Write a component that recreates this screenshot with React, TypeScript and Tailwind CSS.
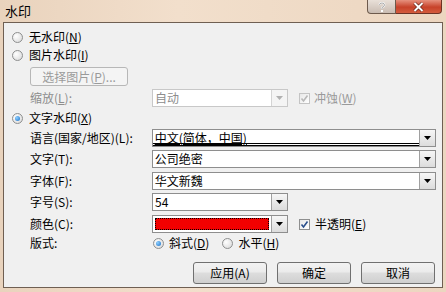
import React from 'react';

const FONT = "font-['SimSun','Noto_Sans_CJK_SC',sans-serif]";

const Radio: React.FC<{ checked?: boolean; disabled?: boolean }> = ({ checked, disabled }) => (
  <span
    className={`inline-flex w-[11px] h-[11px] rounded-full border items-center justify-center shrink-0 ${
      disabled ? 'border-[#b5b5b5]' : 'border-[#8e8f8f]'
    } bg-[radial-gradient(circle_at_35%_35%,#ffffff,#e2e2e2_70%,#d4d4d4)]`}
  >
    {checked && (
      <span className="w-[5px] h-[5px] rounded-full bg-[radial-gradient(circle_at_35%_35%,#8fd0ff,#1a70c8)]" />
    )}
  </span>
);

const Check: React.FC<{ disabled?: boolean }> = ({ disabled }) => (
  <span
    className={`inline-flex w-[11px] h-[11px] border items-center justify-center shrink-0 bg-[linear-gradient(135deg,#e8e8e8,#ffffff)] ${
      disabled ? 'border-[#c4c4c4]' : 'border-[#8e8f8f]'
    }`}
  >
    <svg width="9" height="9" viewBox="0 0 9 9">
      <path
        d="M1.5 4.5 L3.5 7 L7.5 1.5"
        fill="none"
        stroke={disabled ? '#b8b8b8' : '#2a4f8c'}
        strokeWidth="1.6"
      />
    </svg>
  </span>
);

const Arrow: React.FC<{ disabled?: boolean }> = ({ disabled }) => (
  <span
    className={`flex w-[16px] h-full items-center justify-center border-l shrink-0 ${
      disabled
        ? 'border-[#d4d4d4] bg-[#f4f4f4]'
        : 'border-[#a0a0a0] bg-[linear-gradient(to_bottom,#f6f6f6,#dcdcdc)]'
    }`}
  >
    <svg width="7" height="4" viewBox="0 0 7 4">
      <path d="M0 0 H7 L3.5 4 Z" fill={disabled ? '#b0b0b0' : '#000'} />
    </svg>
  </span>
);

const Select: React.FC<{
  value?: string;
  wide?: boolean;
  disabled?: boolean;
  underline?: boolean;
  color?: boolean;
}> = ({ value, wide, disabled, underline, color }) => (
  <div
    className={`flex h-[18px] border bg-white ${wide ? 'w-[285px]' : 'w-[136px]'} ${
      disabled ? 'border-[#c8c8c8] text-[#8d8d8d]' : 'border-[#8e8e8e] text-black'
    }`}
  >
    {color ? (
      <div className="flex-1 p-[2px]">
        <div className="h-full border border-dotted border-black bg-[#f20000]" />
      </div>
    ) : (
      <div className={`flex-1 px-[2px] leading-[16px] ${underline ? 'border-b-[3px] border-double border-black' : ''}`}>
        <span className={underline ? 'underline' : ''}>{value}</span>
      </div>
    )}
    <Arrow disabled={disabled} />
  </div>
);

const Row: React.FC<{ label: string; mt: string; children: React.ReactNode }> = ({ label, mt, children }) => (
  <div className={`flex items-center h-[18px] ${mt}`}>
    <span className="w-[122px] pl-[26px] box-content text-black">{label}</span>
    {children}
  </div>
);

const Btn: React.FC<{ label: string }> = ({ label }) => (
  <button className="w-[74px] h-[22px] rounded-[3px] border border-[#707070] bg-[linear-gradient(to_bottom,#f2f2f2_0%,#ebebeb_45%,#dddddd_50%,#cfcfcf_100%)] text-black text-[12px]">
    {label}
  </button>
);

export default function App() {
  return (
    <div className={`w-[446px] h-[292px] overflow-hidden bg-[linear-gradient(to_right,#e9d3bd,#f2dfcc_40%,#ecd6c0)] ${FONT} text-[12px]`}>
      <div className="relative h-[22px] flex items-center pl-[5px]">
        <span className="text-[13px] text-black">水印</span>
        <div className="absolute top-0 right-[4px] flex">
          <div className="w-[29px] h-[14px] border border-t-0 border-[#6d5a4c] rounded-bl-[4px] bg-[linear-gradient(to_bottom,#e9e0d8,#c9bcb2)] flex items-center justify-center">
            <svg width="8" height="10" viewBox="0 0 8 10">
              <path d="M1.5 3 Q1.5 1 4 1 Q6.5 1 6.5 3 Q6.5 4.5 4 5.5 V7" fill="none" stroke="#fff" strokeWidth="1.8" />
              <rect x="3" y="8" width="2" height="2" fill="#fff" />
              <path d="M1.5 3 Q1.5 1 4 1 Q6.5 1 6.5 3 Q6.5 4.5 4 5.5 V7" fill="none" stroke="#555" strokeWidth="0.5" />
            </svg>
          </div>
          <div className="w-[46px] h-[14px] border border-t-0 border-l-0 border-[#6d3325] rounded-br-[4px] bg-[linear-gradient(to_bottom,#e6917e,#c7422a_55%,#d45c3d)] flex items-center justify-center">
            <svg width="11" height="10" viewBox="0 0 11 10">
              <path d="M1.5 1 L9.5 9 M9.5 1 L1.5 9" stroke="#5a1a10" strokeWidth="3.2" />
              <path d="M1.5 1 L9.5 9 M9.5 1 L1.5 9" stroke="#fff" strokeWidth="2" />
            </svg>
          </div>
        </div>
      </div>
      <div className="mx-[3px] h-[266px] border border-[#6f5f52] bg-[#f0f0f0] px-[6px] pt-[5px]">
        <div className="flex items-center gap-[6px] h-[18px] pl-[2px]">
          <Radio />
          <span>无水印(<span className="underline">N</span>)</span>
        </div>
        <div className="flex items-center gap-[6px] h-[18px] pl-[2px]">
          <Radio />
          <span>图片水印(<span className="underline">I</span>)</span>
        </div>
        <div className="mt-[3px] ml-[20px] w-[98px] h-[19px] border border-[#b7b7b7] rounded-[3px] bg-[#f4f4f4] text-[#9a9a9a] flex items-center justify-center">
          <span>选择图片(<span className="underline">P</span>)...</span>
        </div>
        <div className="flex items-center h-[18px] mt-[3px]">
          <span className="w-[122px] pl-[20px] box-content text-[#8d8d8d]">缩放(<span className="underline">L</span>):</span>
          <Select value="自动" disabled />
          <span className="ml-[11px] flex items-center gap-[4px] text-[#9a9a9a]">
            <Check disabled />
            <span>冲蚀(<span className="underline">W</span>)</span>
          </span>
        </div>
        <div className="flex items-center gap-[6px] h-[18px] pl-[2px] mt-[2px]">
          <Radio checked />
          <span>文字水印(<span className="underline">X</span>)</span>
        </div>
        <div className="-ml-[6px]">
          <Row label="语言(国家/地区)(L):" mt="mt-[2px]">
            <Select value="中文(简体，中国)" wide underline />
          </Row>
          <Row label="文字(T):" mt="mt-[3px]">
            <Select value="公司绝密" wide />
          </Row>
          <Row label="字体(F):" mt="mt-[4px]">
            <Select value="华文新魏" wide />
          </Row>
          <Row label="字号(S):" mt="mt-[3px]">
            <Select value="54" />
          </Row>
          <Row label="颜色(C):" mt="mt-[4px]">
            <Select color />
            <span className="ml-[11px] flex items-center gap-[5px]">
              <Check />
              <span>半透明(<span className="underline">E</span>)</span>
            </span>
          </Row>
          <Row label="版式:" mt="mt-[1px]">
            <span className="flex items-center gap-[5px] pl-[1px]">
              <Radio checked />
              <span>斜式(<span className="underline">D</span>)</span>
            </span>
            <span className="ml-[13px] flex items-center gap-[5px]">
              <Radio />
              <span>水平(<span className="underline">H</span>)</span>
            </span>
          </Row>
        </div>
        <div className="flex justify-end gap-[10px] mt-[10px] pr-[1px]">
          <Btn label="应用(A)" />
          <Btn label="确定" />
          <Btn label="取消" />
        </div>
      </div>
    </div>
  );
}
